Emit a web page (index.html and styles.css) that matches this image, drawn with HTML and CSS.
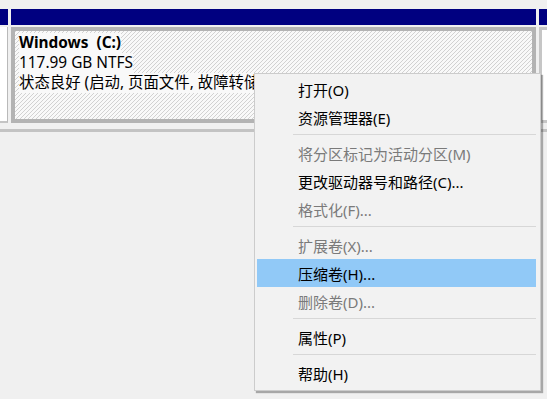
FILE: index.html
```html
<!DOCTYPE html>
<html lang="zh-CN">
<head>
<meta charset="utf-8">
<title>磁盘管理</title>
<link rel="stylesheet" href="styles.css">
</head>
<body>
<div class="disk-row">
  <div class="seg seg-left">
    <div class="seg-head"></div>
    <div class="seg-box"></div>
  </div>
  <div class="seg seg-main">
    <div class="seg-head"></div>
    <div class="seg-box">
      <div class="hatch">
        <span class="vol-line vol-name">Windows&nbsp; (C:)</span>
        <span class="vol-line">117.99 GB NTFS</span>
        <span class="vol-line">状态良好 (启动, 页面文件, 故障转储</span>
      </div>
    </div>
  </div>
  <div class="seg seg-right">
    <div class="seg-head"></div>
    <div class="seg-box"></div>
  </div>
</div>
<div class="rule"></div>

<div class="menu">
  <div class="item">打开(O)</div>
  <div class="item">资源管理器(E)</div>
  <div class="sep"></div>
  <div class="item disabled">将分区标记为活动分区(M)</div>
  <div class="item">更改驱动器号和路径(C)...</div>
  <div class="item disabled">格式化(F)...</div>
  <div class="sep"></div>
  <div class="item disabled">扩展卷(X)...</div>
  <div class="item active">压缩卷(H)...</div>
  <div class="item disabled">删除卷(D)...</div>
  <div class="sep"></div>
  <div class="item">属性(P)</div>
  <div class="sep"></div>
  <div class="item">帮助(H)</div>
</div>
</body>
</html>
```
FILE: styles.css
```css
html, body {
  margin: 0;
  padding: 0;
}
body {
  width: 547px;
  height: 399px;
  overflow: hidden;
  background: #f0f0f0;
  font-family: "Noto Sans", "Noto Sans CJK SC", sans-serif;
  position: relative;
}

.disk-row {
  display: flex;
  gap: 3px;
  padding-top: 9px;
  height: 115px;
}
.seg {
  display: flex;
  flex-direction: column;
  gap: 2px;
  flex: none;
}
.seg-head {
  height: 16px;
  background: #000080;
  flex: none;
}
.seg-left {
  width: 8px;
}
.seg-left .seg-box {
  height: 96px;
  background: #ffffff;
  border-right: 1px solid #b9b9b9;
  border-bottom: 2px solid #c4c4c4;
  box-sizing: border-box;
}
.seg-main {
  width: 525px;
}
.seg-main .seg-box {
  height: 96px;
  box-sizing: border-box;
  border: 4px solid #b3b3b3;
  background: #f9f9f9;
}
.hatch {
  height: 100%;
  box-sizing: border-box;
  padding: 2px 0 0 4px;
  background: repeating-linear-gradient(135deg, #d2d2d2 0 1px, #f9f9f9 1px 2.83px);
  display: flex;
  flex-direction: column;
  align-items: flex-start;
  color: #000;
  font-size: 15.4px;
  line-height: 20px;
}
.vol-line {
  background: #f9f9f9;
  white-space: nowrap;
}
.vol-name {
  font-weight: bold;
}
.seg-right {
  width: 20px;
}
.seg-right .seg-box {
  height: 96px;
  box-sizing: border-box;
  border: 3px solid #c6c6c6;
  background: #ffffff;
}

.rule {
  margin-top: 5px;
  height: 3px;
  background: #c3c3c3;
}

.menu {
  position: absolute;
  left: 254px;
  top: 73px;
  width: 287px;
  box-sizing: border-box;
  padding: 1px 4px 3px 2px;
  background: #f2f2f2;
  border: 1px solid #cccccc;
  box-shadow: 2px 2px 1px rgba(0, 0, 0, 0.3);
  font-size: 15px;
}
.item {
  height: 28px;
  line-height: 30px;
  padding-left: 41px;
  color: #000;
  white-space: nowrap;
}
.item.disabled {
  color: #7a7a7a;
}
.item.active {
  background: #91c9f7;
}
.sep {
  height: 1px;
  margin: 3px 0 4px 36px;
  background: #d7d7d7;
}
```
